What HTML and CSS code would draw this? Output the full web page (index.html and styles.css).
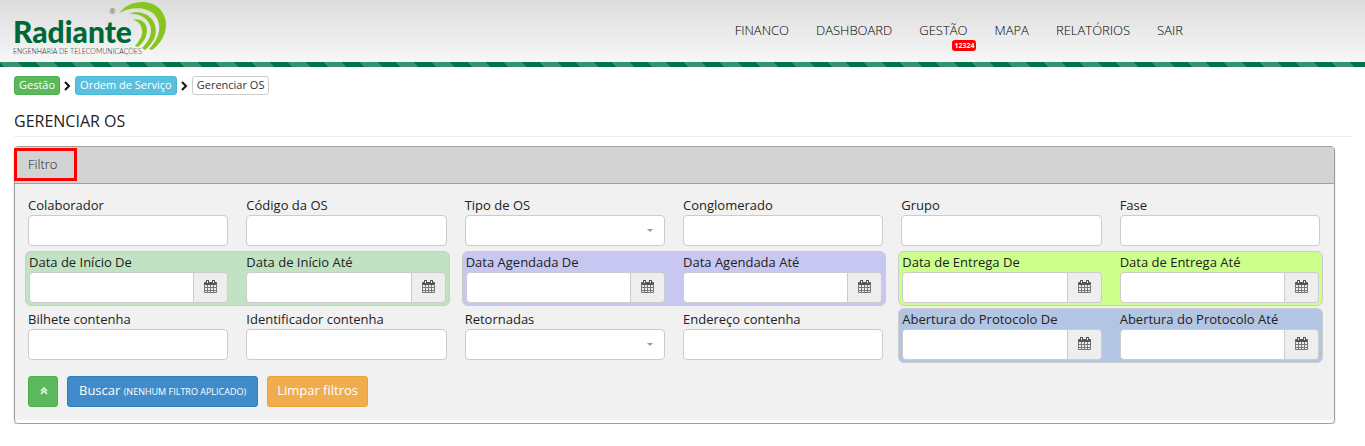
FILE: index.html
```
<!DOCTYPE html>
<html lang="pt-BR">
<head>
  <meta charset="UTF-8">
  <title>Gerenciar OS</title>
  <meta name="viewport" content="width=device-width, initial-scale=1.0">
  <link rel="stylesheet" href="styles.css">
</head>
<body>
  <!-- ícones reutilizados -->
  <svg class="sprite" aria-hidden="true">
    <symbol id="calendario" viewBox="0 0 13 14">
      <path fill="#555" d="M1 2h11q1 0 1 1v2H0V3q0-1 1-1zM2 0h3v3H2zM8 0h3v3H8z"/>
      <path fill="#eee" d="M3 1h1v2H3zM9 1h1v2H9z"/>
      <path fill="none" stroke="#777" d="M.5 4v8.500h12V4M3.500 5v8M6.500 5v8M9.500 5v8M1 7.500h11M1 10.500h11"/>
    </symbol>
    <symbol id="seta" viewBox="0 0 7 10">
      <path d="M1 1l4 4-4 4" fill="none" stroke="#111" stroke-width="2"/>
    </symbol>
  </svg>

  <header>
    <div class="topo">
      <a href="#" class="logo" aria-label="Radiante">
        <svg width="156" height="58" viewBox="0 0 156 58">
          <g fill="#86c61f">
            <path d="M106 13C117-1 137-1 147 9c11 13 6 31-8 41l-3-1c11-11 14-25 5-35-9-8-24-7-35-1z"/>
            <path d="M115 14c12-5 24 1 27 11 3 11-3 19-10 25l-3-2c7-7 11-15 8-23-4-9-13-12-22-11z"/>
            <path d="M120 20c8-2 14 3 14 10s-4 13-9 17l-3-1c5-6 8-11 7-16-1-6-4-9-9-10z"/>
          </g>
          <text x="0" y="43" class="logo-nome">Radiante</text>
          <text x="96" y="14" class="logo-marca">®</text>
          <text x="0" y="54" class="logo-sub">ENGENHARIA DE TELECOMUNICAÇÕES</text>
        </svg>
      </a>
      <nav class="menu">
        <a href="#">FINANCO</a>
        <a href="#">DASHBOARD</a>
        <a href="#" class="com-badge">GESTÃO<span class="badge">12324</span></a>
        <a href="#">MAPA</a>
        <a href="#">RELATÓRIOS</a>
        <a href="#">SAIR</a>
      </nav>
    </div>
    <div class="faixa"></div>
  </header>

  <main class="conteudo">
    <div class="trilha">
      <a href="#" class="label verde">Gestão</a>
      <svg width="7" height="10"><use href="#seta"/></svg>
      <a href="#" class="label azul">Ordem de Serviço</a>
      <svg width="7" height="10"><use href="#seta"/></svg>
      <span class="label branco">Gerenciar OS</span>
    </div>

    <h1>GERENCIAR OS</h1>

    <section class="painel">
      <h2 class="painel-titulo">Filtro</h2>
      <form class="painel-corpo">
        <div class="campos">
          <div class="campo"><label for="colaborador">Colaborador</label><input type="text" id="colaborador"></div>
          <div class="campo"><label for="codigo">Código da OS</label><input type="text" id="codigo"></div>
          <div class="campo"><label for="tipo">Tipo de OS</label><select id="tipo"><option></option></select></div>
          <div class="campo"><label for="conglomerado">Conglomerado</label><input type="text" id="conglomerado"></div>
          <div class="campo"><label for="grupo">Grupo</label><input type="text" id="grupo"></div>
          <div class="campo"><label for="fase">Fase</label><input type="text" id="fase"></div>

          <div class="periodo inicio">
            <div class="campo"><label for="inicioDe">Data de Início De</label>
              <div class="data"><input type="text" id="inicioDe"><button type="button" aria-label="Abrir calendário"><svg width="13" height="14"><use href="#calendario"/></svg></button></div></div>
            <div class="campo"><label for="inicioAte">Data de Início Até</label>
              <div class="data"><input type="text" id="inicioAte"><button type="button" aria-label="Abrir calendário"><svg width="13" height="14"><use href="#calendario"/></svg></button></div></div>
          </div>
          <div class="periodo agendada">
            <div class="campo"><label for="agendadaDe">Data Agendada De</label>
              <div class="data"><input type="text" id="agendadaDe"><button type="button" aria-label="Abrir calendário"><svg width="13" height="14"><use href="#calendario"/></svg></button></div></div>
            <div class="campo"><label for="agendadaAte">Data Agendada Até</label>
              <div class="data"><input type="text" id="agendadaAte"><button type="button" aria-label="Abrir calendário"><svg width="13" height="14"><use href="#calendario"/></svg></button></div></div>
          </div>
          <div class="periodo entrega">
            <div class="campo"><label for="entregaDe">Data de Entrega De</label>
              <div class="data"><input type="text" id="entregaDe"><button type="button" aria-label="Abrir calendário"><svg width="13" height="14"><use href="#calendario"/></svg></button></div></div>
            <div class="campo"><label for="entregaAte">Data de Entrega Até</label>
              <div class="data"><input type="text" id="entregaAte"><button type="button" aria-label="Abrir calendário"><svg width="13" height="14"><use href="#calendario"/></svg></button></div></div>
          </div>

          <div class="campo"><label for="bilhete">Bilhete contenha</label><input type="text" id="bilhete"></div>
          <div class="campo"><label for="identificador">Identificador contenha</label><input type="text" id="identificador"></div>
          <div class="campo"><label for="retornadas">Retornadas</label><select id="retornadas"><option></option></select></div>
          <div class="campo"><label for="endereco">Endereço contenha</label><input type="text" id="endereco"></div>
          <div class="periodo protocolo">
            <div class="campo"><label for="protocoloDe">Abertura do Protocolo De</label>
              <div class="data"><input type="text" id="protocoloDe"><button type="button" aria-label="Abrir calendário"><svg width="13" height="14"><use href="#calendario"/></svg></button></div></div>
            <div class="campo"><label for="protocoloAte">Abertura do Protocolo Até</label>
              <div class="data"><input type="text" id="protocoloAte"><button type="button" aria-label="Abrir calendário"><svg width="13" height="14"><use href="#calendario"/></svg></button></div></div>
          </div>
        </div>

        <div class="botoes">
          <button type="button" class="btn verde recolher" aria-label="Recolher filtros">
            <svg width="8" height="8" viewBox="0 0 8 8"><path d="M1 4l3-3 3 3M1 7l3-3 3 3" fill="none" stroke="#fff" stroke-width="1.3"/></svg>
          </button>
          <button type="submit" class="btn primario">Buscar <small>(NENHUM FILTRO APLICADO)</small></button>
          <button type="reset" class="btn laranja">Limpar filtros</button>
        </div>
      </form>
    </section>
  </main>
</body>
</html>
```
FILE: styles.css
```
*, *::after {
  box-sizing: border-box;
}
body {
  margin: 0;
  background: #fff;
  color: #222;
  font-family: "Open Sans", sans-serif;
  font-size: 13px;
}
a {
  text-decoration: none;
}
.sprite {
  display: none;
}
.topo {
  display: flex;
  justify-content: space-between;
  height: 62px;
  padding: 0 182px 0 13px;
  background: linear-gradient(#dcdcdc, #f7f7f7);
}
.faixa {
  height: 5px;
  background: linear-gradient(45deg, #00754a 25%, #36926f 25% 50%, #00754a 50% 75%, #36926f 75%) 22px bottom / 36px 36px;
}
.logo-nome {
  font: 900 30px Lato, sans-serif;
  fill: #006837;
}
.logo-marca {
  font-size: 8px;
  fill: #666;
}
.logo-sub {
  font: 300 7px Lato, sans-serif;
  fill: #222;
}
.menu {
  display: flex;
  gap: 27px;
  padding-top: 21px;
}
.menu a {
  color: #000;
  font-weight: 300;
  line-height: 18px;
}
.com-badge {
  position: relative;
}
.badge {
  position: absolute;
  right: -9px;
  top: 19px;
  padding: 0 2px;
  border-radius: 3px;
  background: #f00;
  color: #fff;
  font-size: 7px;
  font-weight: bold;
  line-height: 11px;
}
.conteudo {
  padding: 9px 12px 0 14px;
}
.trilha {
  display: flex;
  align-items: center;
  gap: 4px;
}
.label {
  padding: 0 4px 1px;
  border: 1px solid;
  border-radius: 3px;
  font-size: 11px;
  line-height: 16px;
  color: #fff;
}
.verde {
  background: #5cb85c;
  border-color: #4cae4c;
}
.azul {
  background: #5bc0de;
  border-color: #46b8da;
}
.branco {
  background: #fff;
  border-color: #ccc;
  color: #333;
}
h1 {
  margin: 15px 0 9px;
  padding-bottom: 4px;
  border-bottom: 1px solid #eee;
  font-size: 16px;
  font-weight: normal;
  line-height: 22px;
}
.painel {
  margin-right: 18px;
  padding-bottom: 3px;
  border: 1px solid #a0a0a0;
  border-radius: 4px;
  box-shadow: 0 2px 2px rgba(0, 0, 0, .2);
}
.painel-titulo {
  position: relative;
  margin: 0;
  padding: 0 13px 2px;
  border-bottom: 1px solid #a0a0a0;
  background: #d3d3d3;
  font-size: 13px;
  font-weight: 300;
  line-height: 34px;
}
/* destaque do filtro */
.painel-titulo::after {
  content: "";
  position: absolute;
  left: -1px;
  top: 1px;
  width: 63px;
  height: 33px;
  border: 3px solid #f00;
}
.painel-corpo {
  padding: 14px 14px 13px 13px;
  background: #f1f1f1;
}
.campos {
  display: grid;
  grid-template-columns: repeat(6, 1fr);
  gap: 9px 18px;
}
.campo {
  min-width: 0;
}
.campo label {
  display: block;
  padding-bottom: 2px;
  line-height: 15px;
}
.campo input, .campo select {
  display: block;
  width: 100%;
  height: 31px;
  padding: 4px 8px;
  border: 1px solid #ccc;
  border-radius: 4px;
  background: #fff;
  font: inherit;
}
.campo select {
  appearance: none;
  background: #fff url("data:image/svg+xml,%3Csvg xmlns='http://www.w3.org/2000/svg' width='6' height='3'%3E%3Cpath d='M0 0h6L3 3z' fill='%23999'/%3E%3C/svg%3E") right 11px center no-repeat;
}
.periodo {
  display: grid;
  grid-column: span 2;
  grid-template-columns: 1fr 1fr;
  gap: 18px;
  margin: -4px -3px -3px;
  padding: 3px 3px 2px;
  border: 1px solid #ccc;
  border-radius: 6px;
}
.inicio { background: #c1e2c3; }
.agendada { background: #c7c7f1; }
.entrega { background: #ccff8c; }
.protocolo { background: #b2c5e3; }
.data {
  display: flex;
}
.data input {
  flex: 1;
  min-width: 0;
  border-radius: 4px 0 0 4px;
}
.data button {
  display: flex;
  align-items: center;
  justify-content: center;
  width: 34px;
  padding: 0 0 2px;
  border: 1px solid #ccc;
  border-left: 0;
  border-radius: 0 4px 4px 0;
  background: #eee;
}
.botoes {
  display: flex;
  gap: 9px;
  margin-top: 16px;
}
.btn {
  height: 31px;
  padding: 0 11px 3px;
  border: 1px solid;
  border-radius: 3px;
  color: #fff;
  font: 13px "Open Sans", sans-serif;
}
.btn small {
  font-size: 9px;
}
.btn.verde { border-color: #4cae4c; }
.recolher { width: 30px; }
.primario {
  background: #428bca;
  border-color: #357ebd;
}
.laranja {
  padding: 0 9px 3px;
  background: #f0ad4e;
  border-color: #eea236;
}
```
